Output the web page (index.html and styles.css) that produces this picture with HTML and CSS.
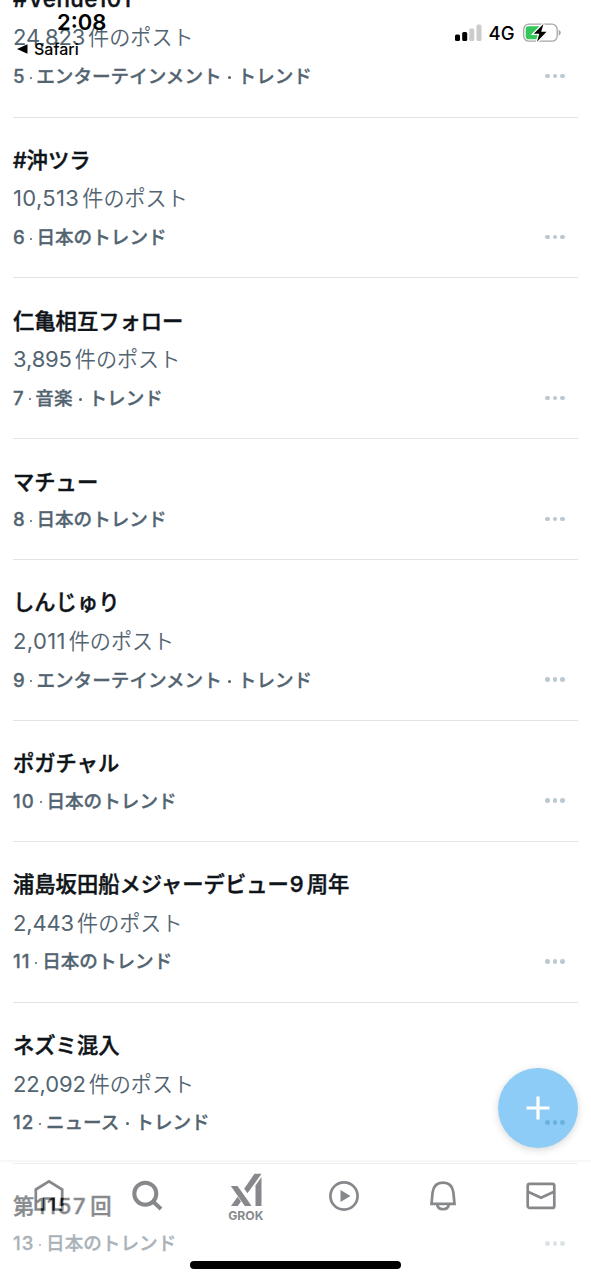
FILE: index.html
```html
<!DOCTYPE html>
<html lang="ja">
<head>
<meta charset="utf-8">
<title>トレンド</title>
<link rel="stylesheet" href="styles.css">
</head>
<body>
<div class="screen">
  <main class="trends">
    <article class="trend">
      <h2 class="title latin">#Venue101</h2>
      <p class="count"><span class="num">24,823</span>件のポスト</p>
      <p class="meta"><span class="rank">5</span><i class="dot"></i>エンターテインメント<i class="dot wide"></i>トレンド<span class="more"><i></i><i></i><i></i></span></p>
    </article>
    <article class="trend">
      <h2 class="title">#沖ツラ</h2>
      <p class="count"><span class="num ones">10,513</span>件のポスト</p>
      <p class="meta"><span class="rank">6</span><i class="dot"></i>日本のトレンド<span class="more"><i></i><i></i><i></i></span></p>
    </article>
    <article class="trend">
      <h2 class="title">仁亀相互フォロー</h2>
      <p class="count"><span class="num">3,895</span>件のポスト</p>
      <p class="meta"><span class="rank">7</span><i class="dot"></i>音楽<i class="dot wide"></i>トレンド<span class="more"><i></i><i></i><i></i></span></p>
    </article>
    <article class="trend short">
      <h2 class="title">マチュー</h2>
      <p class="meta"><span class="rank">8</span><i class="dot"></i>日本のトレンド<span class="more"><i></i><i></i><i></i></span></p>
    </article>
    <article class="trend">
      <h2 class="title">しんじゅり</h2>
      <p class="count"><span class="num ones">2,011</span>件のポスト</p>
      <p class="meta"><span class="rank">9</span><i class="dot"></i>エンターテインメント<i class="dot wide"></i>トレンド<span class="more"><i></i><i></i><i></i></span></p>
    </article>
    <article class="trend short">
      <h2 class="title">ポガチャル</h2>
      <p class="meta"><span class="rank double">10</span><i class="dot"></i>日本のトレンド<span class="more"><i></i><i></i><i></i></span></p>
    </article>
    <article class="trend">
      <h2 class="title">浦島坂田船メジャーデビュー<span class="num nine">9</span>周年</h2>
      <p class="count"><span class="num">2,443</span>件のポスト</p>
      <p class="meta"><span class="rank double">11</span><i class="dot"></i>日本のトレンド<span class="more"><i></i><i></i><i></i></span></p>
    </article>
    <article class="trend">
      <h2 class="title">ネズミ混入</h2>
      <p class="count"><span class="num">22,092</span>件のポスト</p>
      <p class="meta"><span class="rank double">12</span><i class="dot"></i>ニュース<i class="dot wide"></i>トレンド<span class="more"><i></i><i></i><i></i></span></p>
    </article>
    <article class="trend short">
      <h2 class="title">第<span class="num lead">1157</span>回</h2>
      <p class="meta"><span class="rank double">13</span><i class="dot"></i>日本のトレンド<span class="more"><i></i><i></i><i></i></span></p>
    </article>
  </main>

  <header class="status">
    <div class="status-left">
      <span class="clock">2:08</span>
      <span class="back"><svg width="11" height="10" viewBox="0 0 11 10"><path d="M0 5 10.500 .2V9.800Z"/></svg>Safari</span>
    </div>
    <div class="status-right">
      <svg width="27" height="18" viewBox="0 0 27 18">
        <rect x="0" y="10.500" width="5" height="6.500" rx="1.500"/>
        <rect x="7.200" y="8" width="5" height="9" rx="1.500"/>
        <g fill="#ccc"><rect x="14.300" y="4.500" width="5" height="12.500" rx="1.500"/><rect x="21.500" y="0.500" width="5" height="16.500" rx="1.500"/></g>
      </svg>
      <span class="network">4G</span>
      <svg class="battery" width="39" height="20" viewBox="0 0 39 20">
        <rect x=".7" y="1.200" width="33.500" height="17" rx="5.200" fill="#fff" stroke="#a6a6a6" stroke-width="1.300"/>
        <path d="M5.500 3.200H17V16.200H5.500Q2.700 16.200 2.700 13.400V6Q2.700 3.200 5.500 3.200Z" fill="#34c759"/>
        <path d="M35.700 6.700Q37.800 7.500 37.800 9.700T35.700 12.700Z" fill="#a6a6a6"/>
        <path d="M20.500 1 10.800 10.800H16.300L14 18.800 23.500 8.800H18.200Z" stroke="#fff" stroke-width="2.600"/>
        <path d="M20.500 1 10.800 10.800H16.300L14 18.800 23.500 8.800H18.200Z"/>
      </svg>
    </div>
  </header>

  <button class="compose" aria-label="作成"><svg width="80" height="80" viewBox="0 0 80 80"><path d="M40 28.500V51.500M28.500 40H51.500" stroke="#fff" stroke-width="3.200"/></svg></button>

  <nav class="tabs">
    <svg width="32" height="36" viewBox="0 0 32 36"><path d="M2.800 12.500 16 4.300 29.200 12.500V32.500H20.800V21.500H11.200V32.500H2.800Z"/></svg>
    <svg width="32" height="36" viewBox="0 0 32 36"><circle cx="14.300" cy="16.700" r="11" stroke-width="4"/><path d="M22 24.500 30 32" stroke-width="4"/></svg>
    <div class="grok">
      <svg width="32" height="34" viewBox="0 0 32 34"><g fill="#0f1419" stroke="none"><path d="M.8 13H7.500L17.500 27 21.500 33H14.800Z"/><path d="M1 33 7.600 23.800 11 28.500 7.800 33Z"/><path d="M14.200 15.700 24.500.7H31.500L17.500 20.300Z"/><path d="M25.500 12.500 31.500 4V33H25.500Z"/></g></svg>
      <span>GROK</span>
    </div>
    <svg width="32" height="36" viewBox="0 0 32 36"><circle cx="16" cy="19" r="13.600"/><path d="M12.500 13 22.500 19 12.500 25Z" fill="#0f1419" stroke="none"/></svg>
    <svg width="32" height="36" viewBox="0 0 32 36"><path d="M4.500 26.800 5.600 15.500C6.500 8.500 10.500 5.700 16 5.700S25.500 8.500 26.400 15.500L27.500 26.800ZM10.200 27.500C11 33.800 21 33.800 21.800 27.500"/></svg>
    <svg width="32" height="36" viewBox="0 0 32 36"><rect x="2.700" y="6.900" width="26.600" height="24" rx="2"/><path d="M3 14.800 16 20.800 29 14.800"/></svg>
  </nav>
  <div class="home-bar"></div>
</div>
</body>
</html>
```
FILE: styles.css
```css
* { box-sizing: border-box; }
body {
  margin: 0;
  background: #fff;
  font-family: Inter, "Noto Sans CJK JP", sans-serif;
}
.screen {
  position: relative;
  width: 591px;
  height: 1280px;
  overflow: hidden;
  background: #fff;
}
.trends {
  margin-top: -43.300px;
  padding: 0 13px;
}
.trend {
  height: 160.900px;
  padding-top: 23.200px;
  border-bottom: 1px solid #e1e4e6;
}
.trend.short { height: 120.900px; }
.trend.short .title { height: 37.200px; }
.title, .count, .meta {
  height: 38.5px;
  margin: 0;
  line-height: 38px;
  white-space: nowrap;
}
.title {
  color: #0f1419;
  font-size: 21.300px;
  font-weight: 500;
  -webkit-text-stroke: .45px #0f1419;
}
.title.latin {
  font-size: 22.300px;
  letter-spacing: .5px;
}
.title .num {
  margin-right: 3px;
  font-size: 22px;
}
.title .nine { margin-left: 1px; }
.title .lead {
  margin-left: 2px;
  letter-spacing: 1.600px;
}
.count {
  color: #536471;
  font-size: 21.100px;
  font-weight: 350;
}
.count .num {
  margin-right: 3px;
  font-size: 22px;
  font-weight: 400;
  letter-spacing: -.15px;
}
.count .num.ones { letter-spacing: .35px; }
.meta {
  display: flex;
  align-items: center;
  color: #536471;
  font-size: 18.6px;
  font-weight: 500;
  -webkit-text-stroke: .3px #536471;
}
.rank {
  letter-spacing: 1px;
}
.rank.double { margin-right: 1px; }
.dot {
  width: 2px;
  height: 2px;
  margin: 3px 4.700px 0 4px;
  border-radius: 50%;
  background: #536471;
}
.dot.wide {
  width: 3px;
  height: 3px;
  margin: 3px 6.500px 0;
}
.more {
  display: flex;
  gap: 3px;
  margin: 0 13px 0 auto;
}
.more i {
  width: 4.700px;
  height: 4.700px;
  border-radius: 50%;
  background: #bbc8d0;
}
.status {
  position: absolute;
  inset: 0 0 auto;
  display: flex;
  justify-content: space-between;
  padding: 10px 29.500px 0 17px;
  color: #000;
}
.status-left { display: flex; flex-direction: column; }
.clock {
  margin-left: 40px;
  font-size: 22px;
  font-weight: 600;
  line-height: 25px;
}
.back {
  display: flex;
  align-items: center;
  gap: 6px;
  font-size: 16px;
  font-weight: 500;
  line-height: 28px;
}
.status-right {
  display: flex;
  align-items: center;
  height: 45px;
}
.network {
  margin: 1px 8px 0 7px;
  font-size: 18.500px;
  font-weight: 500;
}
.compose {
  position: absolute;
  left: 498px;
  top: 1068px;
  width: 80px;
  height: 80px;
  padding: 0;
  border: 0;
  border-radius: 50%;
  background: #1d9bf0;
  box-shadow: 0 2px 7px rgba(0, 0, 0, .3);
  opacity: .5;
}
.tabs {
  position: absolute;
  inset: 1160px 0 0;
  display: flex;
  justify-content: space-between;
  align-items: flex-start;
  padding: 13px 34px 0 33px;
  border-top: 2px solid #f1f1f1;
  background: #fff;
  opacity: .5;
}
.tabs svg {
  flex: none;
  fill: none;
  stroke: #0f1419;
  stroke-width: 2.700;
}
.tabs > svg { margin-top: 2px; }
.grok {
  display: flex;
  flex-direction: column;
  align-items: center;
  width: 32px;
  margin-top: -2px;
}
.grok span {
  margin-top: 2px;
  color: #0f1419;
  font: bold 12.200px/14px Inter, sans-serif;
}
.home-bar {
  position: absolute;
  left: 190px;
  top: 1261px;
  width: 211px;
  height: 8px;
  border-radius: 4px;
  background: #000;
}
```
